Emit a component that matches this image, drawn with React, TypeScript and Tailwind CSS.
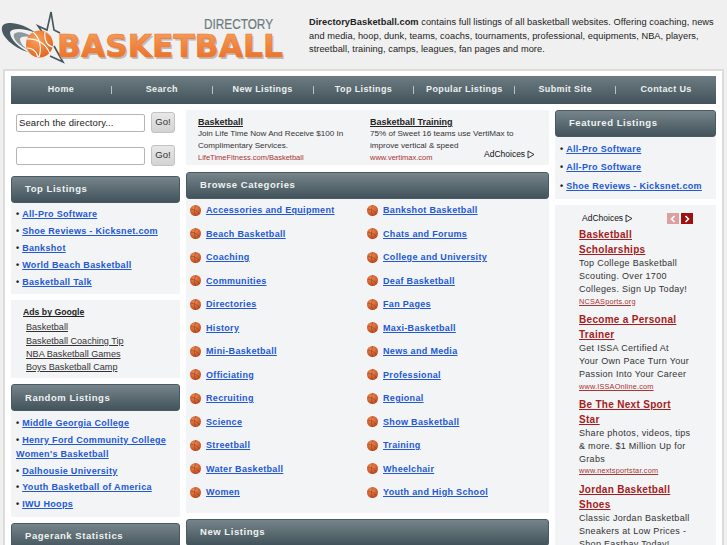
import type { ReactNode } from "react";

const sans = "font-['Liberation_Sans',Arial,sans-serif]";

const navItems = ["Home", "Search", "New Listings", "Top Listings", "Popular Listings", "Submit Site", "Contact Us"];

const categories = [
  ["Accessories and Equipment", "Bankshot Basketball"],
  ["Beach Basketball", "Chats and Forums"],
  ["Coaching", "College and University"],
  ["Communities", "Deaf Basketball"],
  ["Directories", "Fan Pages"],
  ["History", "Maxi-Basketball"],
  ["Mini-Basketball", "News and Media"],
  ["Officiating", "Professional"],
  ["Recruiting", "Regional"],
  ["Science", "Show Basketball"],
  ["Streetball", "Training"],
  ["Water Basketball", "Wheelchair"],
  ["Women", "Youth and High School"],
];

const sideAds = [
  {
    title: ["Basketball", "Scholarships"],
    body: ["Top College Basketball", "Scouting. Over 1700", "Colleges. Sign Up Today!"],
    url: "NCSASports.org",
  },
  {
    title: ["Become a Personal", "Trainer"],
    body: ["Get ISSA Certified At", "Your Own Pace Turn Your", "Passion Into Your Career"],
    url: "www.ISSAOnline.com",
  },
  {
    title: ["Be The Next Sport", "Star"],
    body: ["Share photos, videos, tips", "& more. $1 Million Up for", "Grabs"],
    url: "www.nextsportstar.com",
  },
  {
    title: ["Jordan Basketball", "Shoes"],
    body: ["Classic Jordan Basketball", "Sneakers at Low Prices -", "Shop Eastbay Today!"],
    url: "www.eastbay.com",
  },
];

function Logo() {
  return (
    <svg width="290" height="68" viewBox="0 0 290 68" className="block">
      <defs>
        <linearGradient id="logoText" x1="0" y1="0" x2="0" y2="1">
          <stop offset="0" stopColor="#f6a565" />
          <stop offset="1" stopColor="#e8681f" />
        </linearGradient>
        <radialGradient id="logoBall" cx="0.4" cy="0.35" r="0.75">
          <stop offset="0" stopColor="#f9a25c" />
          <stop offset="1" stopColor="#e0601a" />
        </radialGradient>
      </defs>
      {/* star outline */}
      <path d="M51 12 L47 30 L38 26 L45 36 M51 12 L54 30 L60 33 M54 46 L63 62 L50 56" fill="none" stroke="#46565d" strokeWidth="1.6" />
      {/* swooshes */}
      <path d="M2 27 C4 20 22 22 36 33 C24 28 12 28 10 32 C10 40 20 48 28 52 C14 48 0 36 2 27 Z" fill="#4b5a60" />
      <path d="M14 34 C18 30 28 33 34 38 C27 36 21 36 20 39 C20 43 24 47 28 50 C20 46 12 39 14 34 Z" fill="#8c989c" />
      {/* ball */}
      <circle cx="39.5" cy="44" r="13.5" fill="url(#logoBall)" />
      <path d="M27 39 C36 38 46 43 50 54 M33 32 C40 38 42 48 39 57 M45 32 C44 40 47 46 53 47 M27 48 C32 48 36 50 38 57" fill="none" stroke="#fff" strokeWidth="1.1" />
      <text x="204" y="29" fontSize="15" fontFamily="'Liberation Sans',Arial,sans-serif" fill="#6d7a80" stroke="#6d7a80" strokeWidth="0.2" textLength="69" lengthAdjust="spacingAndGlyphs">
        DIRECTORY
      </text>
      <text x="58.5" y="58.5" fontSize="32" fontWeight="700" fontFamily="'DejaVu Sans',sans-serif" fill="#bdbdbd" textLength="226" lengthAdjust="spacingAndGlyphs">
        BASKETBALL
      </text>
      <text x="57" y="56.5" fontSize="32" fontWeight="700" fontFamily="'DejaVu Sans',sans-serif" fill="url(#logoText)" stroke="#ef7a2e" strokeWidth="0.7" textLength="226" lengthAdjust="spacingAndGlyphs">
        BASKETBALL
      </text>
    </svg>
  );
}

function BallIcon() {
  return (
    <svg width="11" height="11" viewBox="0 0 12 12" className="shrink-0 -mt-px">
      <defs>
        <radialGradient id="catBall" cx="0.4" cy="0.3" r="0.8">
          <stop offset="0" stopColor="#ee8a52" />
          <stop offset="1" stopColor="#b8431a" />
        </radialGradient>
      </defs>
      <circle cx="6" cy="6" r="6" fill="url(#catBall)" />
      <path d="M0.5 4.5 C4 4.5 9 6.5 10.5 10 M6.5 0.2 C4.5 3 4.5 8 6 12" fill="none" stroke="#7d3312" strokeWidth="0.5" />
    </svg>
  );
}

function PanelHeader({ title, className = "" }: { title: string; className?: string }) {
  return (
    <div
      className={`flex items-center h-[27px] pl-[13px] rounded-[3px] border border-[#4a5a61] bg-gradient-to-b from-[#76858b] to-[#43535b] text-[9.5px] font-bold tracking-[0.55px] text-[#f0f2f2] ${className}`}
    >
      {title}
    </div>
  );
}

function ListLink({ children }: { children: ReactNode }) {
  return <a className="text-[#2358d4] font-bold underline tracking-[0.32px] text-[9px]">{children}</a>;
}

function LinkList({ items, className = "" }: { items: string[]; className?: string }) {
  return (
    <ul className={`px-[5px] pt-[3px] pb-[4px] bg-[#f3f4f6] text-[#222] text-[9px] leading-[14px] ${className}`}>
      {items.map((item, i) => (
        <li key={i} className="py-[1.45px]">
          <span className="mr-[3px] font-bold">•</span>
          <ListLink>{item}</ListLink>
        </li>
      ))}
    </ul>
  );
}

function SearchRow({ value, rowClass }: { value: string; rowClass: string }) {
  return (
    <div className={`flex items-center gap-[6px] pl-[5px] ${rowClass}`}>
      <input
        readOnly
        value={value}
        className="w-[129px] h-[18px] rounded-[2px] border border-[#b5b5b5] bg-white px-[2px] text-[9.5px] tracking-[0.1px] text-[#222] outline-none"
      />
      <button className="w-[24px] h-[21px] rounded-[3px] border border-[#c2c2c2] bg-gradient-to-b from-[#e8e8e8] to-[#d3d3d3] text-[9.5px] text-[#333]">
        Go!
      </button>
    </div>
  );
}

function AdChoices({ className = "" }: { className?: string }) {
  return (
    <span className={`flex items-center gap-[2px] text-[8.5px] text-[#111] ${className}`}>
      AdChoices
      <svg width="8" height="9" viewBox="0 0 8 9">
        <path d="M1 1 L7 4.5 L1 8 Z" fill="none" stroke="#222" strokeWidth="0.9" />
      </svg>
    </span>
  );
}

export default function App() {
  return (
    <div className={`${sans} h-[545px] w-[727px] overflow-hidden bg-[#f0f0f0] text-[#222]`}>
      {/* Header */}
      <header className="flex h-[69px]">
        <div className="w-[309px] shrink-0">
          <Logo />
        </div>
        <p className="pt-[16px] w-[418px] text-[9.25px] leading-[13.6px] tracking-[0.05px] whitespace-nowrap">
          <b>DirectoryBasketball.com</b> contains full listings of all basketball websites. Offering coaching, news
          <br />
          and media, hoop, dunk, teams, coachs, tournaments, professional, equipments, NBA, players,
          <br />
          streetball, training, camps, leagues, fan pages and more.
        </p>
      </header>

      {/* Page */}
      <div className="mx-[3px] w-[721px] h-[476px] border-2 border-[#dcdcdc] border-b-0 bg-white px-[6px] pt-[5px]">
        <nav className="flex items-center h-[28px] bg-gradient-to-b from-[#6d7c82] to-[#43535b] text-[9px] font-bold tracking-[0.38px] text-[#eef0f0]">
          {navItems.map((item, i) => (
            <div key={item} className="contents">
              <span className="flex-1 text-center">{item}</span>
              {i < navItems.length - 1 && <span className="w-px h-[8px] bg-[#b9c3c6]" />}
            </div>
          ))}
        </nav>

        <div className="flex gap-[6px] mt-[6px]">
          {/* Left column */}
          <aside className="w-[169px] shrink-0 flex flex-col">
            <SearchRow value="Search the directory..." rowClass="h-[21px] mt-[2px]" />
            <SearchRow value="" rowClass="h-[21px] mt-[12px]" />
            <PanelHeader title="Top Listings" className="mt-[10px]" />
            <LinkList items={["All-Pro Software", "Shoe Reviews - Kicksnet.com", "Bankshot", "World Beach Basketball", "Basketball Talk"]} />
            <div className="mt-[6px] h-[78px] bg-[#f3f4f6] pl-[12px] pt-[6px]">
              <div className="font-bold underline text-[8.7px] leading-[13px] mb-[2px] text-[#222]">Ads by Google</div>
              <div className="pl-[3px] text-[9.1px] leading-[13.2px] text-[#333] underline">
                <div>Basketball</div>
                <div>Basketball Coaching Tip</div>
                <div>NBA Basketball Games</div>
                <div>Boys Basketball Camp</div>
              </div>
            </div>
            <PanelHeader title="Random Listings" className="mt-[6px]" />
            <LinkList items={["Middle Georgia College", "Henry Ford Community College Women's Basketball", "Dalhousie University", "Youth Basketball of America", "IWU Hoops"]} />
            <PanelHeader title="Pagerank Statistics" className="mt-[6px]" />
          </aside>

          {/* Middle column */}
          <main className="w-[363px] shrink-0 flex flex-col">
            <div className="relative h-[55px] bg-[#f3f4f6] text-[8.1px] leading-[12px]">
              <div className="grid grid-cols-[172px_1fr] h-[50px] overflow-hidden pl-[12px] pt-[6px]">
                <div>
                  <div className="font-bold underline text-[9px] text-[#222]">Basketball</div>
                  <div className="text-[#333]">
                    Join Life Time Now And Receive $100 In
                    <br />
                    Complimentary Services.
                  </div>
                  <div className="text-[#a33] text-[7.5px] underline">LifeTimeFitness.com/Basketball</div>
                </div>
                <div>
                  <div className="font-bold underline text-[9px] text-[#222]">Basketball Training</div>
                  <div className="text-[#333]">
                    75% of Sweet 16 teams use VertiMax to
                    <br />
                    improve vertical &amp; speed
                  </div>
                  <div className="text-[#a33] text-[7.5px] underline">www.vertimax.com</div>
                </div>
              </div>
              <AdChoices className="absolute left-[298px] top-[38px]" />
            </div>

            <PanelHeader title="Browse Categories" className="mt-[7px]" />
            <div className="h-[314px] bg-[#f3f4f6] grid grid-cols-[177px_1fr] auto-rows-[23.5px] pl-[4px] content-start">
              {categories.flat().map((cat) => (
                <div key={cat} className="flex items-center gap-[5px]">
                  <BallIcon />
                  <ListLink>{cat}</ListLink>
                </div>
              ))}
            </div>
            <PanelHeader title="New Listings" className="mt-[6px]" />
          </main>

          {/* Right column */}
          <aside className="w-[161px] shrink-0 flex flex-col">
            <PanelHeader title="Featured Listings" />
            <ul className="h-[62px] px-[5px] pt-[3px] bg-[#f3f4f6] text-[9px] leading-[18.4px]">
              {["All-Pro Software", "All-Pro Software", "Shoe Reviews - Kicksnet.com"].map((item, i) => (
                <li key={i}>
                  <span className="mr-[3px] font-bold">•</span>
                  <ListLink>{item}</ListLink>
                </li>
              ))}
            </ul>
            <div className="relative mt-[6px] h-[345px] bg-[#f3f4f6] pl-[24px] pt-[22px] overflow-hidden">
              <AdChoices className="absolute left-[27px] top-[7px]" />
              <span className="absolute left-[112px] top-[8px] flex h-[11px] w-[12px] items-center justify-center bg-[#dba0a0]">
                <svg width="6" height="8" viewBox="0 0 6 8"><path d="M4.5 1 L1.5 4 L4.5 7" fill="none" stroke="#fff" strokeWidth="1.6" /></svg>
              </span>
              <span className="absolute left-[126px] top-[8px] flex h-[11px] w-[12px] items-center justify-center bg-[#a01010]">
                <svg width="6" height="8" viewBox="0 0 6 8"><path d="M1.5 1 L4.5 4 L1.5 7" fill="none" stroke="#fff" strokeWidth="1.6" /></svg>
              </span>
              {sideAds.map((ad) => (
                <div key={ad.url} className="mb-[5.3px]">
                  <div className="text-[10px] font-bold leading-[15px] tracking-[0.3px] text-[#a51c1c] underline">
                    {ad.title.map((line) => (
                      <div key={line}>{line}</div>
                    ))}
                  </div>
                  <div className="text-[9px] leading-[13.2px] tracking-[0.3px] text-[#333]">
                    {ad.body.map((line) => (
                      <div key={line}>{line}</div>
                    ))}
                  </div>
                  <div className="text-[7.3px] leading-[10px] tracking-[0.2px] text-[#a33] underline">{ad.url}</div>
                </div>
              ))}
            </div>
          </aside>
        </div>
      </div>
    </div>
  );
}
